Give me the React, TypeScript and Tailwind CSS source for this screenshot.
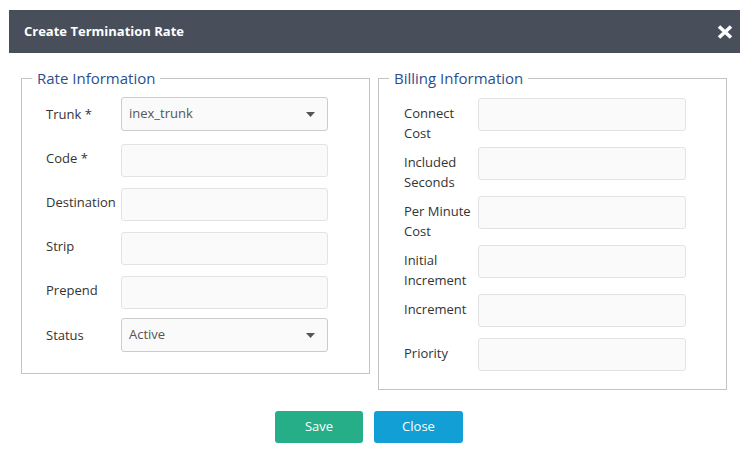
import React from "react";

const Caret = () => (
  <svg width="9" height="5" viewBox="0 0 9 5" className="absolute right-[12px] top-[14px]">
    <path d="M0 0 L9 0 L4.5 5 Z" fill="#555" />
  </svg>
);

function LeftRow({ label, mt, select, value }: { label: string; mt: string; select?: boolean; value?: string }) {
  return (
    <div className={`flex ${select ? "items-center" : "items-start"} ${mt}`}>
      <div className={`w-[75px] shrink-0 text-[13px] leading-[20px] text-[#333] ${select ? "" : "pt-[4px]"}`}>{label}</div>
      {select ? (
        <div className="relative w-[207px] h-[34px] border border-[#cccccc] rounded-[3px] bg-[#fafafa] flex items-center pl-[7px] text-[13px] text-[#555]">
          {value}
          <Caret />
        </div>
      ) : (
        <div className="w-[207px] h-[33px] border border-[#e3e3e3] rounded-[3px] bg-[#fafafa]" />
      )}
    </div>
  );
}

function RightRow({ label, mt }: { label: React.ReactNode; mt: string }) {
  return (
    <div className={`flex items-start h-[33px] ${mt}`}>
      <div className="w-[74px] shrink-0 pt-[5px] text-[13px] leading-[20px] text-[#333]">{label}</div>
      <div className="w-[208px] h-[33px] border border-[#e3e3e3] rounded-[3px] bg-[#fafafa]" />
    </div>
  );
}

export default function App() {
  return (
    <div className="w-[750px] h-[473px] bg-white overflow-hidden" style={{ fontFamily: '"Open Sans", sans-serif' }}>
      <div className="ml-[9px] mt-[10px] w-[731px] h-[43px] bg-[#484f5a] flex items-center justify-between pl-[15px] pr-[7px]">
        <span className="text-white font-bold text-[13px]">Create Termination Rate</span>
        <svg width="16" height="14" viewBox="0 0 16 14">
          <path d="M2 1.5 L14 12.5 M14 1.5 L2 12.5" stroke="white" strokeWidth="3.6" strokeLinecap="butt" />
        </svg>
      </div>
      <div className="flex items-start mt-[15px] ml-[21px] gap-[8px]">
        <fieldset className="w-[349px] border border-[#c4c4c4] px-[10px] pb-[21px] pt-0">
          <legend className="px-[5px] text-[15px] leading-[20px] text-[#2b4f8e]">Rate Information</legend>
          <div className="pl-[14px] pt-[9px]">
            <LeftRow label="Trunk *" mt="mt-0" select value="inex_trunk" />
            <LeftRow label="Code *" mt="mt-[13px]" />
            <LeftRow label="Destination" mt="mt-[11px]" />
            <LeftRow label="Strip" mt="mt-[11px]" />
            <LeftRow label="Prepend" mt="mt-[11px]" />
            <LeftRow label="Status" mt="mt-[9px]" select value="Active" />
          </div>
        </fieldset>
        <fieldset className="w-[349px] border border-[#c4c4c4] px-[10px] pb-[18px] pt-0">
          <legend className="px-[5px] text-[15px] leading-[20px] text-[#2b4f8e]">Billing Information</legend>
          <div className="pl-[15px] pt-[10px]">
            <RightRow label={<>Connect<br />Cost</>} mt="mt-0" />
            <RightRow label={<>Included<br />Seconds</>} mt="mt-[16px]" />
            <RightRow label={<>Per Minute<br />Cost</>} mt="mt-[16px]" />
            <RightRow label={<>Initial<br />Increment</>} mt="mt-[16px]" />
            <RightRow label="Increment" mt="mt-[16px]" />
            <RightRow label="Priority" mt="mt-[11px]" />
          </div>
        </fieldset>
      </div>
      <div className="flex justify-center gap-[11px] mt-[21px] pr-[12px]">
        <button className="w-[88px] h-[32px] rounded-[3px] bg-[#26ae88] text-white text-[13px]">Save</button>
        <button className="w-[89px] h-[32px] rounded-[3px] bg-[#129fd5] text-white text-[13px]">Close</button>
      </div>
    </div>
  );
}
